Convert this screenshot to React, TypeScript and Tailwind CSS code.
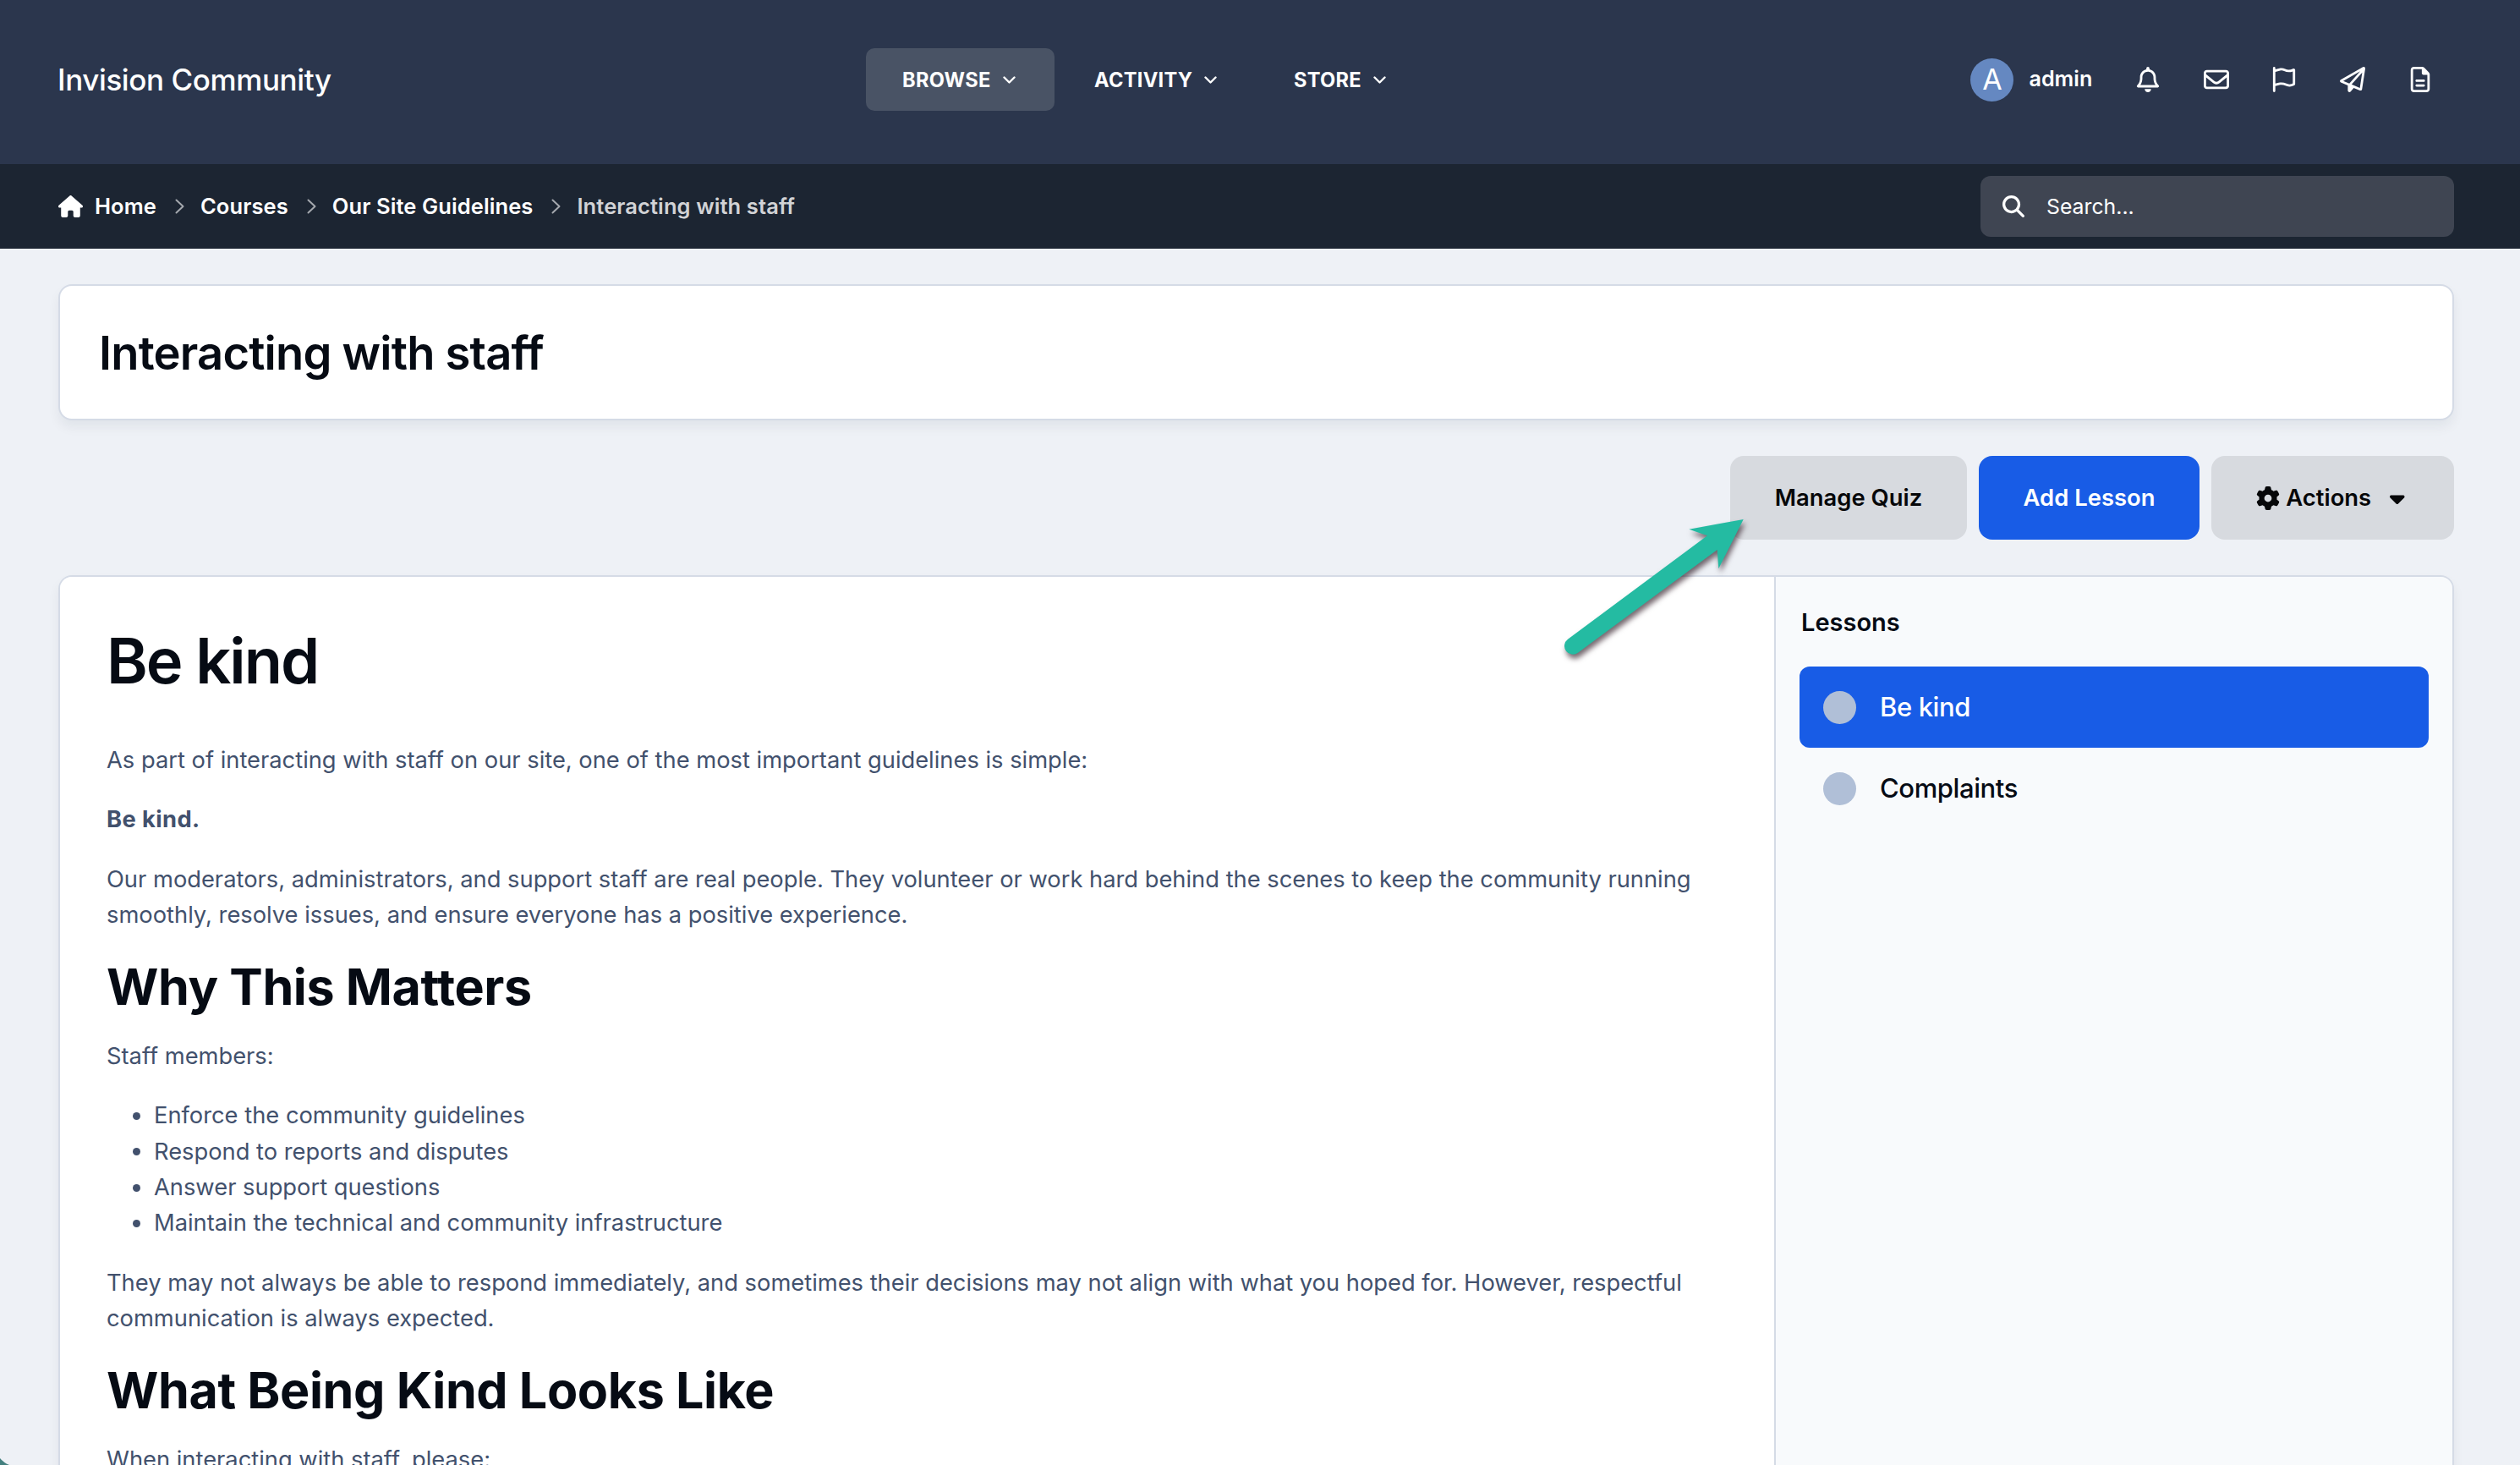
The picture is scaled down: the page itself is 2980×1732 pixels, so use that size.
import type { ReactNode } from "react";
import {
  FaCaretDown, FaGear, FaHouse, FaMagnifyingGlass,
  FaRegBell, FaRegEnvelope, FaRegFileLines, FaRegFlag, FaRegPaperPlane,
} from "react-icons/fa6";

const NAV = [
  { label: "BROWSE", active: true, width: "w-[223px]" },
  { label: "ACTIVITY", active: false, width: "w-[232px]" },
  { label: "STORE", active: false, width: "w-[199px]" },
];

const USER_ICONS = [FaRegBell, FaRegEnvelope, FaRegFlag, FaRegPaperPlane, FaRegFileLines];

const CRUMBS = ["Home", "Courses", "Our Site Guidelines"];

const LESSONS = [
  { title: "Be kind", active: true },
  { title: "Complaints", active: false },
];

const STAFF_DUTIES = [
  "Enforce the community guidelines",
  "Respond to reports and disputes",
  "Answer support questions",
  "Maintain the technical and community infrastructure",
];

function NavChevron() {
  return (
    <svg viewBox="0 0 15 9" className="w-[15px] h-[9px] shrink-0" fill="none" stroke="currentColor" strokeWidth={2.4} strokeLinecap="round" strokeLinejoin="round">
      <path d="M1.5 1.5l6 6 6-6" />
    </svg>
  );
}

function CrumbChevron() {
  return (
    <svg viewBox="0 0 11 18" className="w-[11px] h-[18px] shrink-0 text-[#a4a8ae]" fill="none" stroke="currentColor" strokeWidth={2} strokeLinecap="round" strokeLinejoin="round">
      <path d="M1.5 1.5L9.5 9l-8 7.5" />
    </svg>
  );
}

function Header() {
  return (
    <header className="h-[194px] bg-[#2b364d] text-white flex items-start pt-[57px]">
      <div className="w-[1024px] h-[74px] pl-[68px] flex items-center text-[35px] font-medium tracking-[-0.4px]">
        Invision Community
      </div>
      <nav className="flex gap-1">
        {NAV.map((item) => (
          <a key={item.label} className={`${item.width} h-[74px] pl-[43px] flex items-center gap-[14px] rounded-[10px] text-[23.6px] font-bold tracking-[0.3px] ${item.active ? "bg-[#495365]" : ""}`}>
            <span className="pt-px">{item.label}</span>
            <NavChevron />
          </a>
        ))}
      </nav>
      <div className="ml-auto mr-[103px] h-[74px] flex items-center">
        <div className="size-[51px] rounded-full bg-[#6588c1] flex items-center justify-center text-[34px] leading-none">A</div>
        <span className="ml-[18px] w-[126px] text-[25.2px] font-semibold">admin</span>
        <div className="flex gap-[50.4px]">
          {USER_ICONS.map((Icon, i) => <Icon key={i} className="size-[30px]" />)}
        </div>
      </div>
    </header>
  );
}

function BreadcrumbBar() {
  return (
    <div className="h-[100px] bg-[#1c2532] text-white flex items-center justify-between pl-[69px] pr-[78px]">
      <div className="flex items-center text-[25.5px] font-semibold tracking-[0.1px]">
        <FaHouse className="w-[29px] h-[26px] mr-[14px]" />
        {CRUMBS.map((c) => (
          <span key={c} className="flex items-center">
            {c}
            <span className="ml-[22px] mr-[19px]"><CrumbChevron /></span>
          </span>
        ))}
        <span className="text-[#d2d3d6]">Interacting with staff</span>
      </div>
      <div className="w-[560px] h-[72px] rounded-[12px] bg-[#3f4552] flex items-center pl-[26px] text-[24.8px]">
        <FaMagnifyingGlass className="size-[26px] mr-[26px]" />
        <span className="pt-px">Search...</span>
      </div>
    </div>
  );
}

function Button({ children, className }: { children: ReactNode; className: string }) {
  return (
    <button className={`h-[99px] rounded-[16px] flex items-center justify-center text-[27.4px] font-semibold ${className}`}>
      {children}
    </button>
  );
}

function H2({ children }: { children: ReactNode }) {
  return <h2 className="mt-[29px] mb-[27px] text-[59.2px] leading-[68px] font-bold tracking-[-0.4px] text-[#060b14]">{children}</h2>;
}

function LessonBody() {
  return (
    <article className="flex-1 bg-white pl-[55px] pr-[55px] pt-[55px] text-[27.3px] leading-[42.4px] text-[#42516d]">
      <h1 className="mb-[52.5px] text-[74px] leading-[88px] font-semibold tracking-[-2px] text-[#060b14]">Be kind</h1>
      <p className="mb-[28.2px]">As part of interacting with staff on our site, one of the most important guidelines is simple:</p>
      <p className="mb-[28.2px] font-bold tracking-[0.4px]">Be kind.</p>
      <p>
        Our moderators, administrators, and support staff are real people. They volunteer or work hard behind the scenes to keep the community running
        smoothly, resolve issues, and ensure everyone has a positive experience.
      </p>
      <H2>Why This Matters</H2>
      <p>Staff members:</p>
      <ul className="my-[28.2px] pl-[31px]">
        {STAFF_DUTIES.map((d) => (
          <li key={d} className="flex items-center gap-4">
            <span className="size-[9px] rounded-full bg-[#42516d]" />
            {d}
          </li>
        ))}
      </ul>
      <p>
        They may not always be able to respond immediately, and sometimes their decisions may not align with what you hoped for. However, respectful
        communication is always expected.
      </p>
      <H2>What Being Kind Looks Like</H2>
      <p>When interacting with staff, please:</p>
    </article>
  );
}

function LessonSidebar() {
  return (
    <aside className="w-[802px] border-l-2 border-[#d5dbe6] bg-[#f8fafc] px-[28px] pt-[33px]">
      <h3 className="h-[42px] mb-[31px] pl-[2px] flex items-center text-[29px] font-semibold text-[#060b14]">Lessons</h3>
      {LESSONS.map((l) => (
        <div key={l.title} className={`h-[96px] pl-[28px] flex items-center gap-[28px] rounded-[12px] text-[31px] font-medium tracking-[-0.4px] ${l.active ? "bg-[#185ce6] text-white" : "text-[#060b14]"}`}>
          <span className="size-[39px] rounded-full bg-[#b0bfd7]" />
          <span className="pt-px">{l.title}</span>
        </div>
      ))}
    </aside>
  );
}

// Callout arrow aimed at the quiz button
function PointerArrow() {
  return (
    <svg viewBox="0 0 780 600" className="absolute left-[1830px] top-[590px] w-[260px] h-[200px] overflow-visible drop-shadow-[2px_5px_3px_rgba(45,25,35,0.65)]">
      <path fill="#24bba2" d="M695 72L607 247L602 180L108 545A30 30 0 0 1 72 497L567 130L502 107Z" />
    </svg>
  );
}

export default function App() {
  return (
    <div className="relative w-[2980px] h-[1732px] overflow-hidden bg-[#eef1f6] font-['Inter',sans-serif]">
      <Header />
      <BreadcrumbBar />
      <main className="pl-[69px] pr-[78px] pt-[42px]">
        <div className="h-[161px] pl-[46px] flex items-center rounded-[16px] border-2 border-[#d5dbe6] bg-white shadow-[0_8px_14px_rgba(20,30,50,0.06)]">
          <h1 className="pt-[2px] text-[54.3px] leading-none font-semibold tracking-[-0.8px] text-[#060b14]">Interacting with staff</h1>
        </div>
        <div className="mt-[42px] flex justify-end gap-[14px]">
          <Button className="w-[280px] bg-[#d7dadf] text-[#060709]">Manage Quiz</Button>
          <Button className="w-[261px] bg-[#185ce6] text-white">Add Lesson</Button>
          <Button className="w-[287px] pr-[5px] bg-[#d7dadf] text-[#060709]">
            <FaGear className="size-[28px] mr-[7px]" />
            Actions
            <FaCaretDown className="w-[17.5px] h-[28px] ml-[22px]" />
          </Button>
        </div>
        <section className="mt-[42px] h-[1200px] flex rounded-[16px] border-2 border-[#d5dbe6] overflow-hidden shadow-[0_8px_14px_rgba(20,30,50,0.06)]">
          <LessonBody />
          <LessonSidebar />
        </section>
      </main>
      <PointerArrow />
      <svg viewBox="0 0 11 8" className="absolute left-0 bottom-0 w-[11px] h-[8px]">
        <path fill="#43807f" d="M0 0Q4 5 11 8H0Z" />
      </svg>
    </div>
  );
}
